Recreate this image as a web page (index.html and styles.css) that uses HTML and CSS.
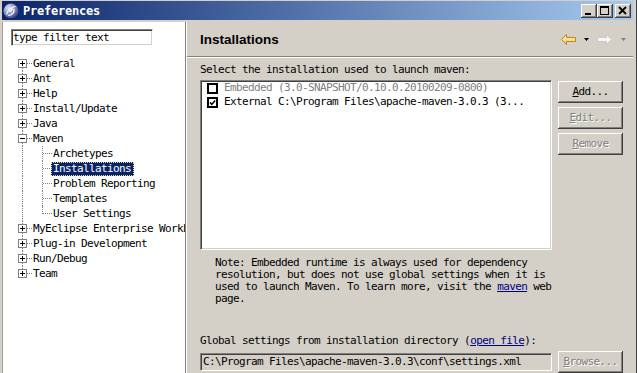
FILE: index.html
```html
<!DOCTYPE html>
<html>
	<head>
		<meta charset="UTF-8">
		<title>Preferences</title>
		<link rel="stylesheet" href="styles.css">
	</head>
	<body>
		<div class="win">
			<div class="titlebar">
				<svg class="logo" width="16" height="16" viewBox="0 0 16 16">
					<defs>
						<radialGradient id="lg" cx="0.35" cy="0.3" r="0.8">
							<stop offset="0" stop-color="#e4e8f8"/>
							<stop offset="0.55" stop-color="#7f88bc"/>
							<stop offset="1" stop-color="#283070"/>
						</radialGradient>
					</defs>
					<circle cx="8" cy="8" r="7.5" fill="url(#lg)"/>
					<path d="M3.5 11.5 C5 7, 8 4, 12.5 3.5 M5 12.5 C9 12.5, 11.5 9.5, 11 6 M6.5 9 C8 8, 9 6.5, 9.5 5" stroke="#fff" stroke-width="1.2" fill="none"/>
				</svg>
				<span class="title">Preferences</span>
				<div class="caps">
					<div class="cap"><svg width="16" height="14"><rect x="4" y="9" width="6" height="2" fill="#000"/></svg></div>
					<div class="cap"><svg width="16" height="14"><rect x="3" y="2" width="9" height="2" fill="#000"/><rect x="3.5" y="2.5" width="8" height="8" fill="none" stroke="#000"/></svg></div>
					<div class="cap close"><svg width="16" height="14"><path d="M4 3 L11 10 M11 3 L4 10" stroke="#000" stroke-width="1.8" fill="none"/></svg></div>
				</div>
			</div>
			<div class="main">
				<div class="left">
					<div class="filter">type filter text</div>
					<ul class="tree">
						<li class="node first"><span class="tw"><svg class="box" width="9" height="9"><rect x=".5" y=".5" width="8" height="8" fill="#fff" stroke="#808080"/><path d="M2 4.5h5M4.5 2v5" stroke="#000"/></svg></span><span class="lbl">General</span></li>
						<li class="node"><span class="tw"><svg class="box" width="9" height="9"><rect x=".5" y=".5" width="8" height="8" fill="#fff" stroke="#808080"/><path d="M2 4.5h5M4.5 2v5" stroke="#000"/></svg></span><span class="lbl">Ant</span></li>
						<li class="node"><span class="tw"><svg class="box" width="9" height="9"><rect x=".5" y=".5" width="8" height="8" fill="#fff" stroke="#808080"/><path d="M2 4.5h5M4.5 2v5" stroke="#000"/></svg></span><span class="lbl">Help</span></li>
						<li class="node"><span class="tw"><svg class="box" width="9" height="9"><rect x=".5" y=".5" width="8" height="8" fill="#fff" stroke="#808080"/><path d="M2 4.5h5M4.5 2v5" stroke="#000"/></svg></span><span class="lbl">Install/Update</span></li>
						<li class="node"><span class="tw"><svg class="box" width="9" height="9"><rect x=".5" y=".5" width="8" height="8" fill="#fff" stroke="#808080"/><path d="M2 4.5h5M4.5 2v5" stroke="#000"/></svg></span><span class="lbl">Java</span></li>
						<li class="node"><span class="tw"><svg class="box" width="9" height="9"><rect x=".5" y=".5" width="8" height="8" fill="#fff" stroke="#808080"/><path d="M2 4.5h5" stroke="#000"/></svg></span><span class="lbl">Maven</span></li>
						<li class="node"><span class="tw cont"></span><span class="tw"></span><span class="lbl">Archetypes</span></li>
						<li class="node"><span class="tw cont"></span><span class="tw"></span><span class="lbl sel">Installations</span></li>
						<li class="node"><span class="tw cont"></span><span class="tw"></span><span class="lbl">Problem Reporting</span></li>
						<li class="node"><span class="tw cont"></span><span class="tw"></span><span class="lbl">Templates</span></li>
						<li class="node"><span class="tw cont"></span><span class="tw end"></span><span class="lbl">User Settings</span></li>
						<li class="node"><span class="tw"><svg class="box" width="9" height="9"><rect x=".5" y=".5" width="8" height="8" fill="#fff" stroke="#808080"/><path d="M2 4.5h5M4.5 2v5" stroke="#000"/></svg></span><span class="lbl">MyEclipse Enterprise Workbench</span></li>
						<li class="node"><span class="tw"><svg class="box" width="9" height="9"><rect x=".5" y=".5" width="8" height="8" fill="#fff" stroke="#808080"/><path d="M2 4.5h5M4.5 2v5" stroke="#000"/></svg></span><span class="lbl">Plug-in Development</span></li>
						<li class="node"><span class="tw"><svg class="box" width="9" height="9"><rect x=".5" y=".5" width="8" height="8" fill="#fff" stroke="#808080"/><path d="M2 4.5h5M4.5 2v5" stroke="#000"/></svg></span><span class="lbl">Run/Debug</span></li>
						<li class="node last"><span class="tw"><svg class="box" width="9" height="9"><rect x=".5" y=".5" width="8" height="8" fill="#fff" stroke="#808080"/><path d="M2 4.5h5M4.5 2v5" stroke="#000"/></svg></span><span class="lbl">Team</span></li>
					</ul>
				</div>
				<div class="right">
					<div class="head">
						<h1>Installations</h1>
						<div class="nav">
							<svg class="back" width="15" height="11" viewBox="0 0 15 11">
								<defs>
									<linearGradient id="ba" x1="0" y1="0" x2="0" y2="1">
										<stop offset="0" stop-color="#fffbe0"/>
										<stop offset="1" stop-color="#f3c24a"/>
									</linearGradient>
								</defs>
								<path d="M0.5 5.5 L5.5 0.5 V3.5 H14.5 V7.5 H5.5 V10.5 Z" fill="url(#ba)" stroke="#c4860e"/>
							</svg>
							<svg class="tri" width="5" height="3"><path d="M0 0h5l-2.5 3z" fill="#000"/></svg>
							<svg class="fwd" width="15" height="11" viewBox="0 0 15 11">
								<path d="M14.5 5.5 L9.5 0.5 V3.5 H0.5 V7.5 H9.5 V10.5 Z" fill="#f6f6f6" stroke="#c8c8c8"/>
							</svg>
							<svg class="tri" width="5" height="3"><path d="M0 0h5l-2.5 3z" fill="#808080"/></svg>
						</div>
					</div>
					<div class="content">
						<p>Select the installation used to launch maven:</p>
						<div class="split">
							<div class="table">
								<div class="row off">
									<svg width="11" height="11"><rect x="1" y="1" width="9" height="9" fill="#fff" stroke="#000" stroke-width="2"/></svg>
									<span>Embedded (3.0-SNAPSHOT/0.10.0.20100209-0800)</span>
								</div>
								<div class="row">
									<svg width="11" height="11"><rect x="1" y="1" width="9" height="9" fill="#fff" stroke="#000" stroke-width="2"/><path d="M3 5.5 L4.8 7.3 L8.2 3.6" stroke="#000" stroke-width="1.5" fill="none"/></svg>
									<span>External C:\Program Files\apache-maven-3.0.3 (3...</span>
								</div>
							</div>
							<div class="btns">
								<div class="btn"><u>A</u>dd...</div>
								<div class="btn dis"><u>E</u>dit...</div>
								<div class="btn dis"><u>R</u>emove</div>
							</div>
						</div>
						<p class="note">Note: Embedded runtime is always used for dependency resolution, but does not use global settings when it is used to launch Maven. To learn more, visit the <a href="#">maven</a> web page.</p>
						<p class="global">Global settings from installation directory (<a href="#">open file</a>):</p>
						<div class="split pathrow">
							<div class="field">C:\Program Files\apache-maven-3.0.3\conf\settings.xml</div>
							<div class="btn dis"><u>B</u>rowse...</div>
						</div>
					</div>
				</div>
			</div>
		</div>
	</body>
</html>
```

FILE: styles.css
```css
*{
	margin: 0;
	padding: 0;
	box-sizing: border-box;
}
body{
	background: #d4d0c8;
	color: #000;
	font: 11px/12px "DejaVu Sans Mono", "Liberation Mono", monospace;
	letter-spacing: -0.62px;
}
ul{
	list-style: none;
}
a{
	display: inline-block;
	line-height: 12px;
	color: #000080;
}
.win{
	width: 637px;
	height: 373px;
	padding: 1px 3px 0 2px;
	border-right: 1px solid #404040;
	display: flex;
	flex-direction: column;
	overflow: hidden;
}

/* title bar */
.titlebar{
	height: 19px;
	margin-bottom: 2px;
	padding: 0 2px 0 1px;
	display: flex;
	align-items: center;
	background: linear-gradient(to right, #0a246a, #a6caf0);
}
.logo{
	flex: none;
}
.title{
	margin: 1px 0 0 4px;
	color: #fff;
	font: bold 12px "DejaVu Sans Mono", monospace;
	letter-spacing: -0.22px;
}
.caps{
	margin-left: auto;
	display: flex;
}
.cap{
	width: 16px;
	height: 14px;
	background: #d4d0c8;
	box-shadow: inset -1px -1px #404040, inset 1px 1px #fff, inset -2px -2px #808080;
}
.cap svg{
	display: block;
}
.close{
	margin-left: 2px;
}

.main{
	flex: 1;
	min-height: 0;
	display: flex;
}

/* left tree */
.left{
	width: 184px;
	flex: none;
	background: #fff;
	border-left: 1px solid #a0a0a0;
	border-right: 1px solid #808080;
	padding: 7px 0 0 8px;
	overflow: hidden;
}
.filter{
	width: 142px;
	height: 17px;
	padding: 1px 0 0 1px;
	line-height: 13px;
	border: 1px solid;
	border-color: #808080 #fff #fff #808080;
	box-shadow: inset 1px 1px #404040, inset -1px -1px #d4d0c8;
}
.tree{
	margin-top: 10px;
	padding-left: 1px;
}
.node{
	height: 15px;
	display: flex;
	align-items: center;
	white-space: nowrap;
}
.tw{
	flex: none;
	width: 20px;
	height: 15px;
	position: relative;
}
.tw::before{
	content: "";
	position: absolute;
	left: 10px;
	top: 0;
	bottom: 0;
	border-left: 1px dotted #808080;
}
.tw::after{
	content: "";
	position: absolute;
	left: 11px;
	top: 7px;
	width: 9px;
	border-top: 1px dotted #808080;
}
.tw.cont::after{
	display: none;
}
.first .tw::before{
	top: 7px;
}
.last .tw::before{
	bottom: 8px;
}
.tw.end::before{
	bottom: 7px;
}
.box{
	position: absolute;
	left: 6px;
	top: 3px;
	z-index: 1;
}
.lbl{
	margin-left: -1px;
	padding: 0 2px 0 1px;
	line-height: 12px;
	border: 1px solid transparent;
}
.lbl.sel{
	background: #0a246a;
	color: #fff;
	border: 1px dotted #e8d890;
}

/* right page */
.right{
	flex: 1;
	border-left: 1px solid #fff;
	display: flex;
	flex-direction: column;
}
.head{
	height: 35px;
	padding: 0 7px 0 13px;
	display: flex;
	align-items: center;
	border-bottom: 1px solid #808080;
	box-shadow: 0 1px #fff;
}
.head h1{
	margin-top: 1px;
	font: bold 13.5px "Liberation Sans", Arial, sans-serif;
	letter-spacing: 0;
}
.nav{
	margin-left: auto;
	display: flex;
	align-items: center;
}
.nav .tri{
	margin: 1px 8px 0 8px;
}
.nav .tri:last-child{
	margin-right: 0;
	margin-left: 9px;
}
.content{
	padding: 7px 0 0 13px;
}
.split{
	display: flex;
	gap: 6px;
	margin-top: 4px;
}
.table{
	width: 352px;
	height: 170px;
	padding: 0 0 0 6px;
	background: #fff;
	border: 1px solid;
	border-color: #808080 #fff #fff #808080;
	box-shadow: inset 1px 1px #404040, inset -1px -1px #d4d0c8;
}
.row{
	height: 14px;
	display: flex;
	align-items: center;
	gap: 6px;
	white-space: nowrap;
}
.row svg{
	flex: none;
}
.row.off span{
	color: #808080;
}
.btns{
	margin-top: 1px;
	display: flex;
	flex-direction: column;
	gap: 4px;
}
.btn{
	width: 65px;
	height: 22px;
	line-height: 22px;
	text-align: center;
	background: #d4d0c8;
	box-shadow: inset -1px -1px #404040, inset 1px 1px #fff, inset -2px -2px #808080;
}
.btn.dis{
	color: #808080;
	text-shadow: 1px 1px #fff;
}
.note{
	width: 340px;
	margin: 7px 0 0 15px;
}
.global{
	margin-top: 30px;
}
.pathrow{
	margin-top: 4px;
	align-items: center;
}
.field{
	width: 352px;
	height: 18px;
	padding: 1px 0 0 2px;
	line-height: 14px;
	white-space: nowrap;
	border: 1px solid;
	border-color: #808080 #fff #fff #808080;
	box-shadow: inset 1px 1px #404040, inset -1px -1px #d4d0c8;
}
```
